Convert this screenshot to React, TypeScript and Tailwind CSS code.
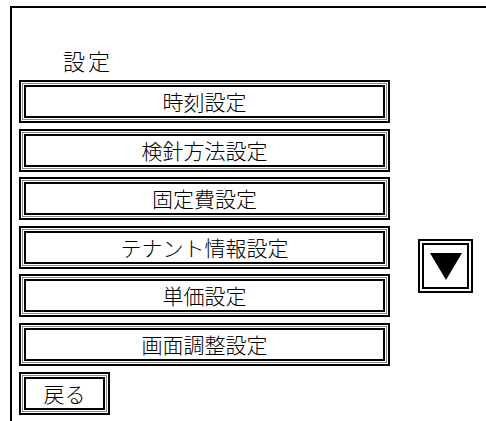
import React from 'react';

const items = ['時刻設定', '検針方法設定', '固定費設定', 'テナント情報設定', '単価設定', '画面調整設定'];

function FrameButton({ label, className }: { label: React.ReactNode; className: string }) {
  return (
    <div className={`border-2 border-black bg-white p-[1px] ${className}`}>
      <div className="h-full border border-[#8a8a8a] p-[1px]">
        <div className="flex h-full items-center justify-center border-2 border-black text-[21px] font-light leading-none text-black">
          {label}
        </div>
      </div>
    </div>
  );
}

export default function App() {
  return (
    <div
      className="h-[421px] w-[486px] overflow-hidden bg-white pl-[10px] pt-[6px]"
      style={{ fontFamily: '"Noto Sans CJK JP", "Noto Sans", sans-serif' }}
    >
      <div className="h-[430px] w-[520px] border-l-2 border-t-2 border-black pl-[7px]">
        <div className="mt-[41px] pl-[44px] text-[22px] font-light leading-none tracking-[3px] text-black">設定</div>
        <div className="mt-[9px] flex">
          <div className="flex w-[371px] flex-col gap-[5.6px]">
            {items.map((t) => (
              <FrameButton key={t} label={t} className="h-[43px]" />
            ))}
            <FrameButton label="戻る" className="h-[43px] w-[91px]" />
          </div>
          <div className="ml-[28px] mt-[159px] h-[54px] w-[55px] border-2 border-black p-[2px]">
            <div className="flex h-full items-center justify-center border-2 border-black">
              <svg width="32" height="27" viewBox="0 0 32 27">
                <polygon points="0,0 32,0 16,27" fill="black" />
              </svg>
            </div>
          </div>
        </div>
      </div>
    </div>
  );
}
